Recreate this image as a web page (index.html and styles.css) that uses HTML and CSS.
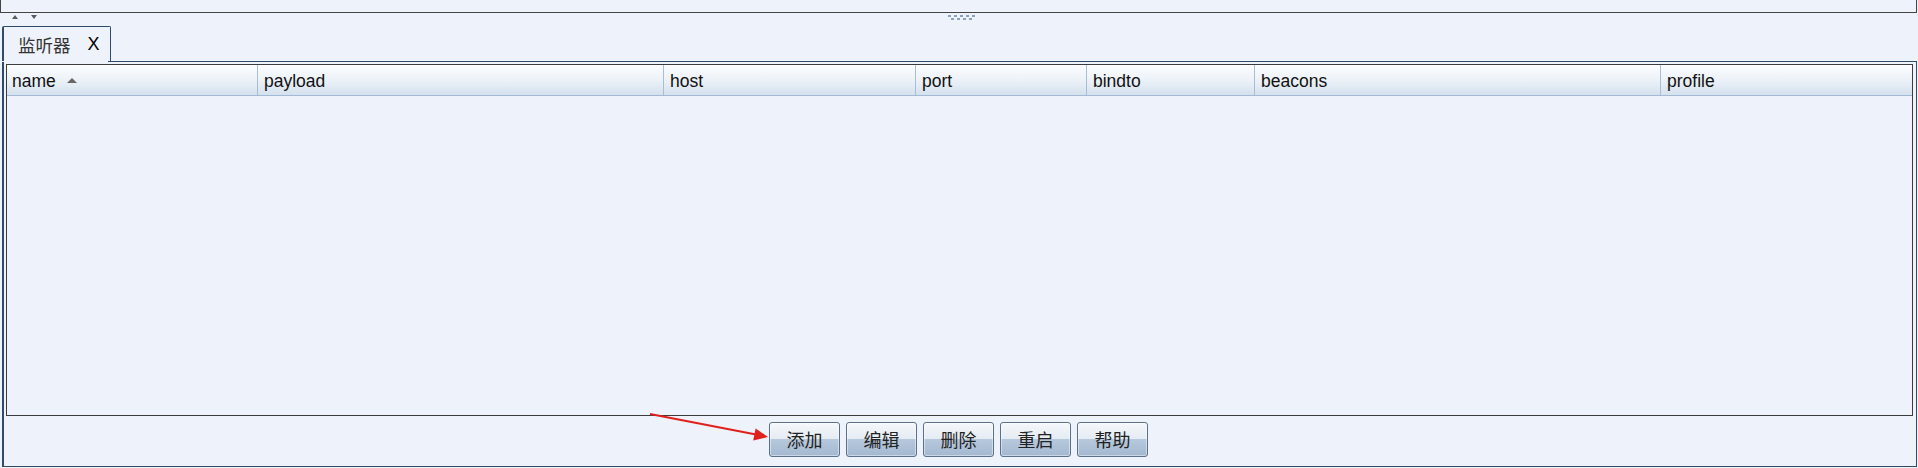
FILE: index.html
```html
<!DOCTYPE html>
<html>
<head>
<meta charset="utf-8">
<link rel="stylesheet" href="styles.css">
</head>
<body>
<div class="top"></div>
<div class="splitter">
  <div class="split-arrows">
    <svg width="6" height="4" viewBox="0 0 6 4"><polygon points="0,4 3,0 6,4" fill="#5a5a5a"/></svg>
    <svg width="6" height="4" viewBox="0 0 6 4"><polygon points="0,0 3,4 6,0" fill="#5a5a5a"/></svg>
  </div>
  <div class="grip">
    <div class="grip-row"><i></i><i></i><i></i><i></i><i></i></div>
    <div class="grip-row"><i></i><i></i><i></i><i></i></div>
  </div>
</div>
<div class="tabs">
  <div class="tab"><span class="tab-title">监听器</span><span class="tab-close">X</span></div>
</div>
<div class="panel">
  <div class="table">
    <div class="thead">
      <div class="th first">name <svg class="sort" width="10" height="5" viewBox="0 0 10 5"><polygon points="0,5 5,0 10,5" fill="#666"/></svg></div>
      <div class="th">payload</div>
      <div class="th">host</div>
      <div class="th">port</div>
      <div class="th">bindto</div>
      <div class="th">beacons</div>
      <div class="th last">profile</div>
    </div>
    <div class="tbody"></div>
  </div>
  <div class="buttons">
    <button class="btn">添加</button>
    <button class="btn">编辑</button>
    <button class="btn">删除</button>
    <button class="btn">重启</button>
    <button class="btn">帮助</button>
  </div>
</div>
<svg class="annot" width="1918" height="468" viewBox="0 0 1918 468">
  <line x1="650" y1="414" x2="756" y2="434.5" stroke="#e0201c" stroke-width="2.2"/>
  <polygon points="768,437 753.2,440.4 755.6,428.4" fill="#e0201c"/>
</svg>
</body>
</html>
```
FILE: styles.css
```css
html, body {
  margin: 0;
  padding: 0;
}
body {
  width: 1918px;
  height: 468px;
  overflow: hidden;
  background: #eef2fa;
  font-family: "Liberation Sans", Arial, "Noto Sans CJK SC", sans-serif;
  position: relative;
}
.top {
  width: 1915px;
  height: 12px;
  border: 1px solid #444;
  border-top: none;
}
.splitter {
  height: 13px;
  display: flex;
  align-items: flex-start;
  position: relative;
}
.split-arrows {
  display: flex;
  gap: 13px;
  padding-left: 12px;
  padding-top: 2px;
}
.split-arrows svg {
  display: block;
}
.grip {
  position: absolute;
  left: 948px;
  top: 2px;
  display: flex;
  flex-direction: column;
  gap: 1px;
}
.grip-row {
  display: flex;
  gap: 3px;
  height: 2px;
}
.grip-row:nth-child(2) {
  padding-left: 3px;
}
.grip-row i {
  display: block;
  width: 3px;
  height: 2px;
  background: #8aa0bb;
}
.tabs {
  height: 35px;
  display: flex;
  align-items: flex-end;
}
.tab {
  box-sizing: border-box;
  margin-left: 2px;
  width: 109px;
  height: 35px;
  border: 1px solid #2f4b6b;
  border-left-width: 2px;
  border-bottom: none;
  border-top-left-radius: 2px;
  border-top-right-radius: 2px;
  display: flex;
  align-items: center;
  padding-left: 14px;
  font-size: 17.5px;
}
.tab-title {
  font-family: "Noto Sans CJK SC", sans-serif;
  color: #333;
}
.tab-close {
  margin-left: 17px;
  font-family: "Liberation Sans", Arial, sans-serif;
  color: #000;
  font-size: 18px;
}
.panel {
  box-sizing: border-box;
  margin-left: 2px;
  width: 1915px;
  height: 406px;
  border: 1px solid #2f4b6b;
  border-left-width: 2px;
  padding: 2px 3px 0 2px;
  display: flex;
  flex-direction: column;
  position: relative;
}
.panel::before {
  content: "";
  position: absolute;
  left: -2px;
  top: -1px;
  width: 106px;
  height: 1px;
  background: #eef2fa;
}
.table {
  box-sizing: border-box;
  width: 1907px;
  height: 352px;
  border: 1px solid #3c3c3c;
  display: flex;
  flex-direction: column;
}
.thead {
  display: grid;
  grid-template-columns: 251px 406px 252px 171px 168px 406px 251px;
  height: 30px;
  border-bottom: 1px solid #a2bad3;
  background: linear-gradient(#fbfcfe 0%, #eef3f9 45%, #d5e1ee 100%);
}
.th {
  box-sizing: border-box;
  border-right: 1px solid #a9bed4;
  padding-left: 6px;
  padding-top: 3px;
  font-size: 17.5px;
  color: #111;
  display: flex;
  align-items: center;
  white-space: nowrap;
}
.th.first {
  padding-left: 5px;
}
.th.last {
  border-right: none;
}
.sort {
  margin-left: 11px;
  margin-top: -3px;
}
.tbody {
  flex: 1;
}
.buttons {
  display: flex;
  justify-content: center;
  gap: 6px;
  padding-top: 6px;
  padding-right: 2px;
}
.btn {
  box-sizing: border-box;
  width: 71px;
  height: 35px;
  margin: 0;
  padding: 0;
  border: 1px solid #5b7089;
  border-radius: 3px;
  background: linear-gradient(#f5f8fb 0%, #e4ebf3 48%, #b6c8dc 50%, #a3b8d0 100%);
  box-shadow: inset 0 0 0 1px rgba(255,255,255,0.45);
  font-family: "Noto Sans CJK SC", sans-serif;
  font-size: 18px;
  color: #222;
  line-height: 33px;
}
.annot {
  position: absolute;
  left: 0;
  top: 0;
  pointer-events: none;
}
```
